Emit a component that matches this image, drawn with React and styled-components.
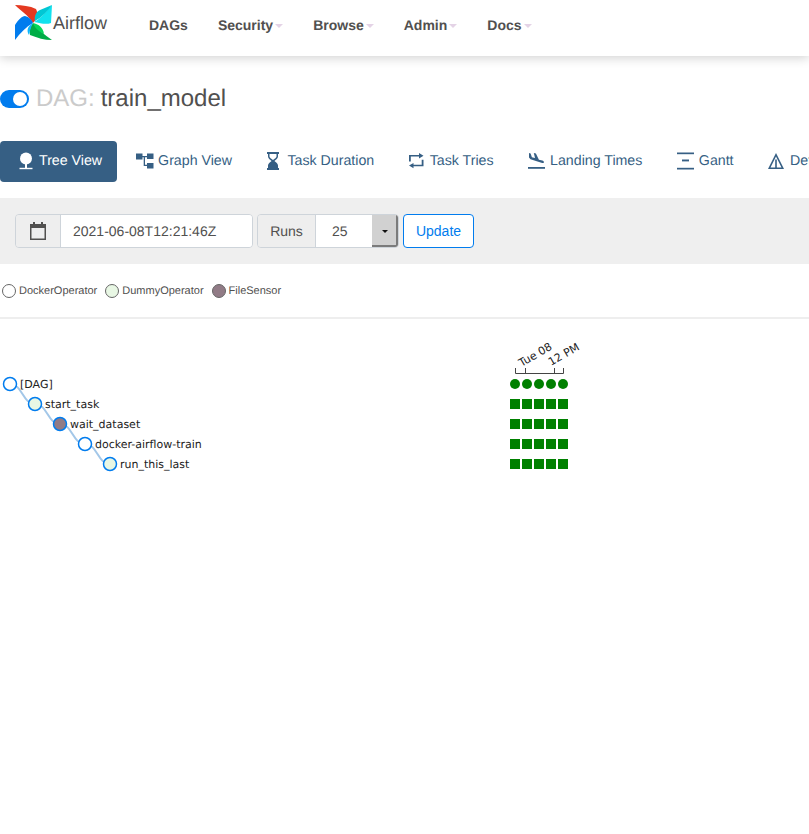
import styled, { createGlobalStyle } from 'styled-components'

const GlobalStyle = createGlobalStyle`
  html, body {
    margin: 0;
    padding: 0;
    background: #fff;
    overflow: hidden;
  }
  body {
    font-family: "Liberation Sans", Arial, sans-serif;
    color: #51504f;
    text-rendering: geometricPrecision;
  }
`

const Page = styled.div`
  width: 809px;
  height: 834px;
  overflow: hidden;
`

const Navbar = styled.nav`
  height: 56px;
  display: flex;
  align-items: center;
  background: #fff;
  box-shadow: 0 2px 10px rgba(0, 0, 0, 0.18);
`

const Brand = styled.a`
  width: 149px;
  height: 56px;
  flex: none;
  display: flex;
  align-items: flex-start;
`

const LogoMark = styled.svg`
  flex: none;
  margin: 5px 0 0 15px;
`

const BrandName = styled.span`
  margin: 13px 0 0 1px;
  font-size: 18px;
  line-height: 20px;
  color: #51504f;
`

const NavItem = styled.a`
  display: flex;
  align-items: center;
  margin-right: ${(props) => props.$gap}px;
  margin-top: -6px;
  font-size: 14px;
  font-weight: 700;
  line-height: 20px;
  color: #51504f;
`

const NavCaret = styled.i`
  width: 0;
  height: 0;
  margin: 2px 0 0 2px;
  border-top: 4px solid #e4d3e6;
  border-left: 4px solid transparent;
  border-right: 4px solid transparent;
`

const TitleRow = styled.div`
  height: 85px;
  padding-top: 1px;
  box-sizing: border-box;
  display: flex;
  align-items: center;
  font-size: 24px;
`

const Toggle = styled.span`
  position: relative;
  width: 29px;
  height: 18px;
  flex: none;
  margin-right: 7px;
  border-radius: 9px;
  background: #017cee;

  &::after {
    content: '';
    position: absolute;
    top: 2px;
    right: 2px;
    width: 14px;
    height: 14px;
    border-radius: 50%;
    background: #fff;
  }
`

const TitleLabel = styled.span`
  color: #cbcbcb;
  margin-right: 6px;
`

const TitleName = styled.span`
  color: #51504f;
`

const Tabs = styled.div`
  display: flex;
  height: 41px;
  margin-bottom: 16px;
  white-space: nowrap;
`

const Tab = styled.a`
  flex: none;
  display: flex;
  align-items: center;
  height: 41px;
  padding: 0 ${(props) => (props.$active ? '15px' : '15.5px')} 1px 19px;
  box-sizing: border-box;
  border-radius: 4px;
  font-size: 14.2px;
  background: ${(props) => (props.$active ? '#365f84' : 'transparent')};
  color: ${(props) => (props.$active ? '#fff' : '#365f84')};
`

const TabIcon = styled.span`
  flex: none;
  display: flex;
  width: ${(props) => props.$slot}px;
  margin-right: 4px;

  svg {
    display: block;
    fill: currentColor;
  }
`

const FilterBar = styled.div`
  height: 66px;
  display: flex;
  align-items: center;
  padding-left: 15px;
  background: #efefef;
  font-size: 14px;
`

const InputGroup = styled.div`
  display: flex;
  height: 34px;
  margin-right: ${(props) => props.$gap}px;
  border: 1px solid #ced4da;
  border-radius: 4px;
  box-sizing: border-box;
  overflow: hidden;
`

const Addon = styled.span`
  width: ${(props) => props.$width}px;
  display: flex;
  align-items: center;
  justify-content: center;
  background: #eee;
  border-right: 1px solid #ced4da;
  color: #51504f;
`

const DateValue = styled.span`
  width: 179px;
  padding-left: 12px;
  box-sizing: content-box;
  line-height: 32px;
  background: #fff;
  color: #51504f;
`

const SelectBox = styled.span`
  width: 82px;
  display: flex;
  background: #fff;
  line-height: 32px;
`

const SelectValue = styled.span`
  flex: 1;
  padding-left: 16px;
  color: #51504f;
`

const SelectArrow = styled.span`
  width: 26px;
  display: flex;
  align-items: center;
  justify-content: center;
  background: #d1d1d1;
  box-shadow: inset -2px -2px 0 #7b7b7b;

  &::after {
    content: '';
    border-top: 3px solid #111;
    border-left: 3px solid transparent;
    border-right: 3px solid transparent;
  }
`

const UpdateButton = styled.button`
  width: 71px;
  height: 34px;
  padding: 0;
  background: #fff;
  border: 1px solid #017cee;
  border-radius: 4px;
  font: inherit;
  color: #017cee;
`

const Legend = styled.div`
  height: 52px;
  padding: 1px 0 0 2px;
  box-sizing: content-box;
  display: flex;
  align-items: center;
  border-bottom: 2px solid #eee;
  font-size: 11px;
  color: #51504f;
`

const LegendItem = styled.span`
  display: flex;
  align-items: center;
  gap: 3px;
  margin-right: 8px;
`

const LegendDot = styled.i`
  width: 14px;
  height: 14px;
  border-radius: 50%;
  border: 1px solid #666;
  box-sizing: border-box;
  background: ${(props) => props.$color};
`

const Chart = styled.svg`
  display: block;
  font-family: "DejaVu Sans", sans-serif;
  font-size: 11px;
  fill: #222;
`

const TABS = [
  {
    key: 'tree',
    label: 'Tree View',
    active: true,
    slot: 16,
    icon: (
      <svg width="14" height="18" viewBox="0 0 14 18">
        <circle cx="7" cy="6.500" r="6" />
        <rect x="6" y="10" width="2" height="6" />
        <rect x="0.500" y="15.800" width="13" height="1.400" />
      </svg>
    ),
  },
  {
    key: 'graph',
    label: 'Graph View',
    slot: 18,
    icon: (
      <svg width="18" height="16" viewBox="0 0 18 16">
        <rect x="0" y="0.500" width="6.500" height="6" />
        <rect x="11" y="0.500" width="6.500" height="5.500" />
        <rect x="11" y="10" width="6.500" height="5.500" />
        <path d="M6 3h5v1.300H9v7.400h2V13H7.700V4.300H6z" />
      </svg>
    ),
  },
  {
    key: 'duration',
    label: 'Task Duration',
    slot: 17,
    icon: (
      <svg width="14" height="18" viewBox="0 0 14 18">
        <path d="M1 0h12v2h-1v2.500C12 6.500 10 7.700 8.400 9 10 10.300 12 11.500 12 13.500V16h1v2H1v-2h1v-2.500C2 11.500 4 10.300 5.600 9 4 7.700 2 6.500 2 4.500V2H1zM3.500 2v2.500c0 1 1.800 2.300 3.500 3.500 1.700-1.200 3.500-2.500 3.500-3.500V2z" />
        <path d="M3.500 16v-2.500C4 12 5.800 11 7 10c1.200 1 3 2 3.500 3.500V16z" />
      </svg>
    ),
  },
  {
    key: 'tries',
    label: 'Task Tries',
    slot: 17,
    icon: (
      <svg width="15" height="16" viewBox="0 0 15 16">
        <path d="M0 2h10V0l4.500 2.700L10 5.500V3.600H1.800V8.500H0z" />
        <path d="M14.500 13.300h-10v2L0 12.600 4.500 10v1.700h8.200V6.800h1.800z" />
      </svg>
    ),
  },
  {
    key: 'landing',
    label: 'Landing Times',
    slot: 18,
    icon: (
      <svg width="17" height="16" viewBox="0 0 17 16">
        <path d="M0 14h17v1.800H0z" />
        <path d="M1 0l1.600.4 1.300 3.800 3.100.9L5.800 0l2.100.5 3 6.200 3.400.9c1 .3 1.800 1 1.600 1.800-.2.600-1 .8-1.700.6L2.500 6.200 1 4.600z" />
      </svg>
    ),
  },
  {
    key: 'gantt',
    label: 'Gantt',
    slot: 18,
    icon: (
      <svg width="17" height="18" viewBox="0 0 17 18">
        <rect x="0" y="0.500" width="17" height="1.700" />
        <rect x="5" y="7.500" width="7" height="1.900" />
        <rect x="0" y="15.800" width="17" height="1.700" />
      </svg>
    ),
  },
  {
    key: 'details',
    label: 'Details',
    slot: 18,
    icon: (
      <svg width="16" height="16" viewBox="0 0 16 16">
        <path d="M8 0l8 16H0zM8 3.500L2.500 14.500h4.700V6.500h1.600v8h4.700z" />
      </svg>
    ),
  },
]

const NAV_ITEMS = [
  { label: 'DAGs', gap: 30 },
  { label: 'Security', caret: true, gap: 30 },
  { label: 'Browse', caret: true, gap: 30 },
  { label: 'Admin', caret: true, gap: 30 },
  { label: 'Docs', caret: true, gap: 0 },
]

const NODES = [
  { label: '[DAG]', fill: '#fff' },
  { label: 'start_task', fill: '#e8f7e4' },
  { label: 'wait_dataset', fill: '#917b86' },
  { label: 'docker-airflow-train', fill: '#fff' },
  { label: 'run_this_last', fill: '#e8f7e4' },
]

const COLUMNS = [515, 527, 539, 551, 563]

// horizontal tangents at both ends, same as a d3 diagonal link
const linkPath = (i) => {
  const x0 = 10 + i * 25
  const y0 = 384 + i * 20
  const mid = x0 + 12.5
  return `M${x0} ${y0}C${mid} ${y0} ${mid} ${y0 + 20} ${x0 + 25} ${y0 + 20}`
}

const Logo = () => (
  <LogoMark width="37" height="36" viewBox="15 5 37 36">
    <path d="M15 5C22 5 30 6 36 9C38 13 38 18 33 23C28 15 21 11 15 5Z" fill="#e43921" />
    <path d="M52 5L51 23C46 25 40 23 34 22C40 19 47 11 52 5Z" fill="#11e1ee" />
    <path d="M52 5C48 11 42 17 35 21C34 16 36 12 40 10Z" fill="#00c7d4" />
    <path d="M52 40C44 40 38 38 30 35C29 31 30 27 33 23C38 30 45 35 52 40Z" fill="#00ad46" />
    <path d="M33 23C38 24 43 27 44 34C38 31 35 28 33 23Z" fill="#04d659" />
    <path d="M15 40L15 25C18 20 22 16 25 16C29 17 32 20 33 23C26 27 20 33 15 40Z" fill="#017cee" />
    <path d="M33 23C28 26 26 30 29 35C30 30 31 27 33 23Z" fill="#0cb6ff" />
  </LogoMark>
)

const App = () => {
  return (
    <Page>
      <GlobalStyle />
      <Navbar>
        <Brand>
          <Logo />
          <BrandName>Airflow</BrandName>
        </Brand>
        {NAV_ITEMS.map((item) => (
          <NavItem key={item.label} $gap={item.gap}>
            {item.label}
            {item.caret && <NavCaret />}
          </NavItem>
        ))}
      </Navbar>

      <TitleRow>
        <Toggle />
        <TitleLabel>DAG:</TitleLabel>
        <TitleName>train_model</TitleName>
      </TitleRow>

      <Tabs>
        {TABS.map((tab) => (
          <Tab key={tab.key} $active={tab.active}>
            <TabIcon $slot={tab.slot}>{tab.icon}</TabIcon>
            {tab.label}
          </Tab>
        ))}
      </Tabs>

      <FilterBar>
        <InputGroup $gap={4}>
          <Addon $width={44}>
            <svg width="18" height="18" viewBox="0 0 18 18" fill="#51504f">
              <path d="M1 2h3V0h2v2h6V0h2v2h3v16H1zM2.500 6v10.500h13V6z" />
            </svg>
          </Addon>
          <DateValue>2021-06-08T12:21:46Z</DateValue>
        </InputGroup>
        <InputGroup $gap={4}>
          <Addon $width={57}>Runs</Addon>
          <SelectBox>
            <SelectValue>25</SelectValue>
            <SelectArrow />
          </SelectBox>
        </InputGroup>
        <UpdateButton>Update</UpdateButton>
      </FilterBar>

      <Legend>
        <LegendItem><LegendDot $color="#fff" />DockerOperator</LegendItem>
        <LegendItem><LegendDot $color="#e8f7e4" />DummyOperator</LegendItem>
        <LegendItem><LegendDot $color="#917b86" />FileSensor</LegendItem>
      </Legend>

      <Chart width="809" height="170" viewBox="0 319 809 170">
        {[0, 1, 2, 3].map((i) => (
          <path key={i} d={linkPath(i)} fill="none" stroke="#a3c7e8" strokeWidth="2" />
        ))}
        {NODES.map((node, i) => (
          <g key={node.label}>
            <circle cx={10 + i * 25} cy={384 + i * 20} r="6.500" fill={node.fill} stroke="#017cee" strokeWidth="1.500" />
            <text x={20 + i * 25} y={388 + i * 20}>{node.label}</text>
          </g>
        ))}

        <path
          d="M515.500 368V373.500H563.500V368M525.500 368V373.500M554.500 368V373.500"
          fill="none"
          stroke="#444"
        />
        <text transform="translate(521.500 367) rotate(-30)">Tue 08</text>
        <text transform="translate(551 366) rotate(-30)">12 PM</text>

        {COLUMNS.map((x) => (
          <circle key={x} cx={x} cy="384" r="5" fill="green" />
        ))}
        {[404, 424, 444, 464].map((y) =>
          COLUMNS.map((x) => (
            <rect key={`${x}-${y}`} x={x - 5} y={y - 5} width="10" height="10" fill="green" />
          ))
        )}
      </Chart>
    </Page>
  )
}

export default App
